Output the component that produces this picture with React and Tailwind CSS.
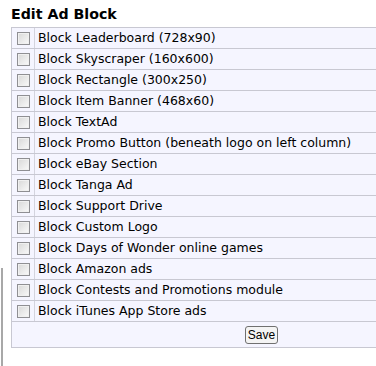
const ITEMS = [
  'Block Leaderboard (728x90)',
  'Block Skyscraper (160x600)',
  'Block Rectangle (300x250)',
  'Block Item Banner (468x60)',
  'Block TextAd',
  'Block Promo Button (beneath logo on left column)',
  'Block eBay Section',
  'Block Tanga Ad',
  'Block Support Drive',
  'Block Custom Logo',
  'Block Days of Wonder online games',
  'Block Amazon ads',
  'Block Contests and Promotions module',
  'Block iTunes App Store ads',
]

function Box() {
  return (
    <span className="block w-[13px] h-[13px] border border-[#8f8f93] bg-gradient-to-br from-[#d8d8d8] to-[#fafafa] shadow-[inset_0_0_0_1px_#f0f0f0]" />
  )
}

export default function App() {
  return (
    <div className="w-[376px] h-[366px] overflow-hidden bg-white flex" style={{ fontFamily: '"DejaVu Sans", Verdana, sans-serif' }}>
      {/* sidebar edge */}
      <div className="w-[11px] flex-shrink-0 flex flex-col">
        <div className="h-[268px]" />
        <div className="ml-[1px] w-[2px] flex-1 bg-[#a8a8a8]" />
      </div>

      <div className="flex-shrink-0">
        <h2 className="text-[14.2px] font-bold text-black leading-[18px] pt-[5px] h-[27px]">Edit Ad Block</h2>

        <div className="w-[500px] border-l border-t border-[#c8c8d2] bg-[#f5f5ff]">
          {ITEMS.map(label => (
            <div key={label} className="flex h-[21px] border-b border-[#c8c8d2]">
              <div className="w-[23px] flex items-center justify-center border-r border-[#d4d4de]">
                <Box />
              </div>
              <div className="flex-1 flex items-center pl-[3px] text-[12.5px] text-black leading-none whitespace-nowrap">
                {label}
              </div>
            </div>
          ))}
          <div className="h-[26px] flex items-center justify-center border-b border-[#c8c8d2]">
            <button
              className="px-[2px] h-[18px] border border-[#707070] rounded-[3px] bg-[#f4f4f4] text-[12px] leading-none text-black"
              style={{ fontFamily: '"Liberation Sans", Arial, sans-serif' }}
            >
              Save
            </button>
          </div>
        </div>
      </div>
    </div>
  )
}
